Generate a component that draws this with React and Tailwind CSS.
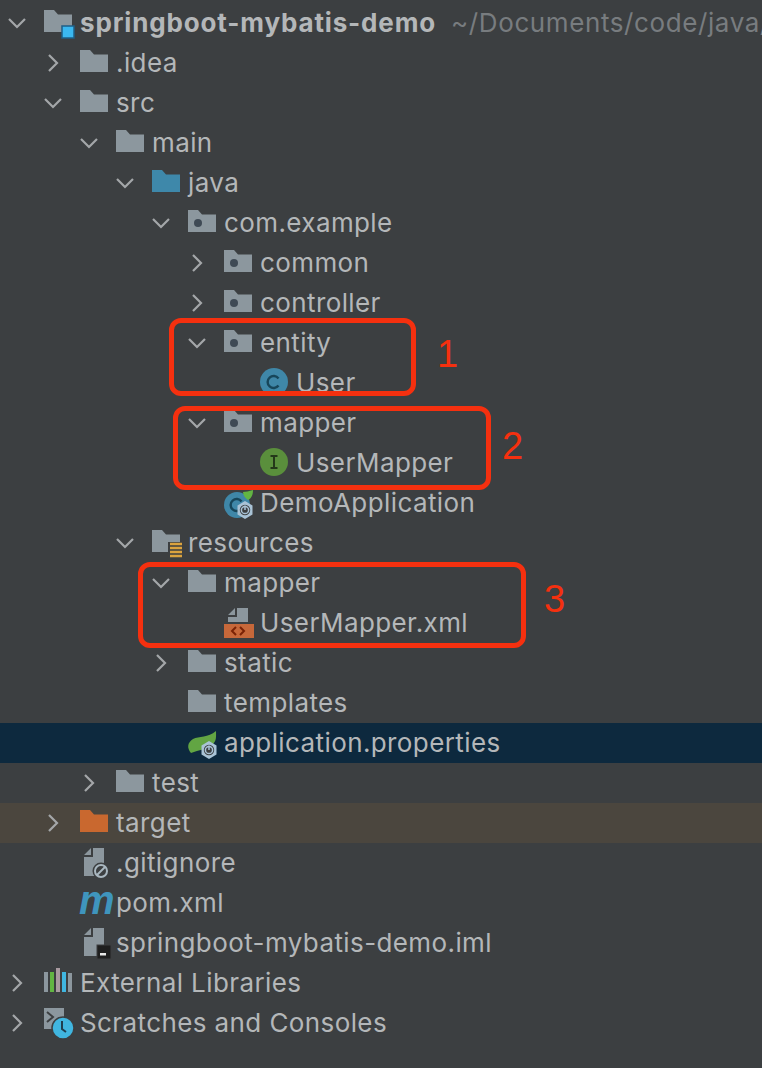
import React from 'react'

const GRAY = '#8c979e'
const BG = '#3c3f41'

const Folder = ({ color = GRAY, children }) => (
  <svg width="28" height="28" viewBox="0 0 28 28" className="overflow-visible">
    <path d="M0 1h10l4 4.5h14V23H0z" fill={color} />
    {children}
  </svg>
)

const PackageFolder = () => (
  <Folder>
    <circle cx="10" cy="14" r="4" fill="#3f4a55" />
  </Folder>
)

const ModuleFolder = () => (
  <Folder>
    <rect x="18" y="17" width="12" height="12" fill="#3bb8f0" stroke="#1f5f86" strokeWidth="1.5" />
  </Folder>
)

const ResourceFolder = () => (
  <Folder>
    <rect x="16" y="13" width="16" height="17" fill={BG} />
    <path d="M18 15h12M18 19h12M18 23h12M18 27h12" stroke="#dba33e" strokeWidth="2.4" />
  </Folder>
)

const ClassIcon = ({ letter, color }) => (
  <svg width="28" height="28" viewBox="0 0 28 28" className="overflow-visible">
    <circle cx="14" cy="13" r="14" fill={color} />
    {letter === 'C' ? (
      <path d="M18.5 9.5a6 6 0 1 0 0 7" fill="none" stroke="#17465a" strokeWidth="2.4" />
    ) : (
      <path d="M10.5 7h7M10.5 19h7M14 7v12" fill="none" stroke="#24381a" strokeWidth="2" />
    )}
  </svg>
)

const PowerBadge = ({ x, y }) => (
  <g transform={`translate(${x} ${y})`}>
    <path d="M8 -1l7.5 4.5v9L8 17l-7.5-4.5v-9z" fill="#a9c3d6" />
    <circle cx="8" cy="8" r="5.2" fill={BG} />
    <circle cx="8" cy="8" r="3.6" fill="none" stroke="#a9c3d6" strokeWidth="1.5" />
    <path d="M8 3.5v4.5" stroke="#a9c3d6" strokeWidth="1.5" />
  </g>
)

const SpringClass = () => (
  <svg width="32" height="32" viewBox="0 0 32 32" className="overflow-visible">
    <circle cx="13" cy="16" r="13" fill="#3f87a8" />
    <path d="M17.5 12.5a6 6 0 1 0 0 7" fill="none" stroke="#17465a" strokeWidth="2.4" />
    <path d="M19 3c3 0 6-1 10-2 0 4-1 8-5 10-3-2-5-5-5-8z" fill="#62b543" />
    <PowerBadge x={13} y={13} />
  </svg>
)

const Doc = ({ children }) => (
  <svg width="28" height="32" viewBox="0 0 28 32" className="overflow-visible">
    <path d="M4 6l7-7v7zM13 -1h11v28H4V8h9z" fill={GRAY} />
    {children}
  </svg>
)

const XmlFile = () => (
  <svg width="32" height="32" viewBox="0 0 32 32" className="overflow-visible">
    <path d="M4 6l7-7v7zM13 -1h11v14H4V8h9z" fill={GRAY} />
    <rect y="15" width="30" height="14" fill="#c7683a" />
    <path d="M12 18l-4 4 4 4M16 18l4 4-4 4" fill="none" stroke="#7a2205" strokeWidth="2" />
  </svg>
)

const SpringProps = () => (
  <svg width="32" height="32" viewBox="0 0 32 32" className="overflow-visible">
    <path d="M28 2c0 5 1 10-4 14-5 4-13 5-21 8-4-5-4-10 2-14 6-3 15-1 23-8z" fill="#62a543" />
    <PowerBadge x={13} y={13} />
  </svg>
)

const GitIgnore = () => (
  <Doc>
    <circle cx="21" cy="22" r="8.5" fill={BG} />
    <circle cx="21" cy="22" r="6" fill="none" stroke="#a9b7c0" strokeWidth="2" />
    <path d="M17 26l8-8" stroke="#a9b7c0" strokeWidth="2" />
  </Doc>
)

const ImlFile = () => (
  <Doc>
    <rect x="17" y="16" width="14" height="14" fill="#1f1f1f" stroke={BG} />
    <rect x="20" y="24" width="6" height="2.5" fill="#e8e8e8" />
  </Doc>
)

const PomIcon = () => (
  <span className="block w-[30px] -ml-[1px] text-center text-[#3f95bd] italic font-black text-[40px] leading-[28px] font-['Liberation_Sans',sans-serif] -translate-y-[3px]">
    m
  </span>
)

const Libraries = () => (
  <svg width="28" height="28" viewBox="0 0 28 28" className="overflow-visible">
    <rect x="0" y="3" width="4" height="20" fill={GRAY} />
    <rect x="6" y="3" width="4" height="20" fill="#62b543" />
    <rect x="12" y="-1" width="4" height="24" fill="#a99aa0" />
    <rect x="18" y="3" width="4" height="20" fill="#40b6e0" />
    <rect x="24" y="4" width="4" height="19" fill={GRAY} />
  </svg>
)

const Scratches = () => (
  <svg width="32" height="32" viewBox="0 0 32 32" className="overflow-visible">
    <rect x="0" y="-1" width="20" height="21" fill={GRAY} />
    <path d="M3 3l6 5-6 5" fill="none" stroke={BG} strokeWidth="2" />
    <circle cx="19" cy="19" r="11" fill="#40b6e0" stroke={BG} strokeWidth="1.5" />
    <path d="M18 12v8l4 3" fill="none" stroke="#1f3f50" strokeWidth="2" />
  </svg>
)

const ICONS = {
  module: <ModuleFolder />,
  folder: <Folder />,
  source: <Folder color="#3e88aa" />,
  pkg: <PackageFolder />,
  resources: <ResourceFolder />,
  excluded: <Folder color="#c9682f" />,
  cls: <ClassIcon letter="C" color="#3f87a8" />,
  iface: <ClassIcon letter="I" color="#5a8f3c" />,
  spring: <SpringClass />,
  xml: <XmlFile />,
  props: <SpringProps />,
  git: <GitIgnore />,
  pom: <PomIcon />,
  iml: <ImlFile />,
  libs: <Libraries />,
  scratch: <Scratches />,
}

const rows = [
  { depth: 0, open: true, icon: 'module', label: 'springboot-mybatis-demo', bold: true, hint: '~/Documents/code/java/' },
  { depth: 1, open: false, icon: 'folder', label: '.idea' },
  { depth: 1, open: true, icon: 'folder', label: 'src' },
  { depth: 2, open: true, icon: 'folder', label: 'main' },
  { depth: 3, open: true, icon: 'source', label: 'java' },
  { depth: 4, open: true, icon: 'pkg', label: 'com.example' },
  { depth: 5, open: false, icon: 'pkg', label: 'common' },
  { depth: 5, open: false, icon: 'pkg', label: 'controller' },
  { depth: 5, open: true, icon: 'pkg', label: 'entity' },
  { depth: 6, icon: 'cls', label: 'User' },
  { depth: 5, open: true, icon: 'pkg', label: 'mapper' },
  { depth: 6, icon: 'iface', label: 'UserMapper' },
  { depth: 5, icon: 'spring', label: 'DemoApplication' },
  { depth: 3, open: true, icon: 'resources', label: 'resources' },
  { depth: 4, open: true, icon: 'folder', label: 'mapper' },
  { depth: 5, icon: 'xml', label: 'UserMapper.xml' },
  { depth: 4, open: false, icon: 'folder', label: 'static' },
  { depth: 4, icon: 'folder', label: 'templates' },
  { depth: 4, icon: 'props', label: 'application.properties', tone: 'selected' },
  { depth: 2, open: false, icon: 'folder', label: 'test' },
  { depth: 1, open: false, icon: 'excluded', label: 'target', tone: 'excluded' },
  { depth: 1, icon: 'git', label: '.gitignore' },
  { depth: 1, icon: 'pom', label: 'pom.xml' },
  { depth: 1, icon: 'iml', label: 'springboot-mybatis-demo.iml' },
  { depth: 0, open: false, icon: 'libs', label: 'External Libraries' },
  { depth: 0, open: false, icon: 'scratch', label: 'Scratches and Consoles' },
]

const Chevron = ({ open }) => (
  <svg width="18" height="18" viewBox="0 0 18 18" fill="none" stroke="#a4a7a9" strokeWidth="2.2">
    {open ? <path d="M1 5l8 8 8-8" /> : <path d="M5 1l8 8-8 8" />}
  </svg>
)

function TreeRow({ row }) {
  const toneClass =
    row.tone === 'selected' ? 'bg-[#0d293e]' : row.tone === 'excluded' ? 'bg-[#4b463e]' : ''
  return (
    <div className={`flex items-center h-10 ${toneClass}`} style={{ paddingLeft: row.depth * 36 }}>
      <div className="w-[34px] mr-[10px] shrink-0 flex justify-center">
        {row.open !== undefined && <Chevron open={row.open} />}
      </div>
      <div className="w-[28px] h-[28px] mr-[8px] shrink-0">{ICONS[row.icon]}</div>
      <span className={`pb-[2px] text-[26px] text-[#b4b7b9] ${row.bold ? 'font-bold tracking-[0.85px]' : 'tracking-[0.4px]'}`}>
        {row.label}
      </span>
      {row.hint && <span className="pb-[2px] ml-[15px] text-[26px] tracking-[0.6px] text-[#787c7f]">{row.hint}</span>}
    </div>
  )
}

const Callout = ({ className }) => (
  <div className={`absolute rounded-[12px] border-[5px] border-[#f5300f] ${className}`} />
)

const CalloutNumber = ({ className, children }) => (
  <span className={`absolute text-[38px] leading-none text-[#f5300f] font-['Liberation_Sans',sans-serif] ${className}`}>
    {children}
  </span>
)

export default function App() {
  return (
    <div className="relative w-[762px] h-[1068px] overflow-hidden whitespace-nowrap bg-[#3c3f41] pt-[3px] font-['Inter',sans-serif]">
      {rows.map((row, i) => (
        <TreeRow key={i} row={row} />
      ))}

      <Callout className="left-[169px] top-[318px] w-[247px] h-[78px]" />
      <Callout className="left-[173px] top-[406px] w-[318px] h-[84px]" />
      <Callout className="left-[138px] top-[562px] w-[388px] h-[86px]" />
      <CalloutNumber className="left-[437px] top-[335px]">1</CalloutNumber>
      <CalloutNumber className="left-[502px] top-[427px]">2</CalloutNumber>
      <CalloutNumber className="left-[544px] top-[580px]">3</CalloutNumber>
    </div>
  )
}
